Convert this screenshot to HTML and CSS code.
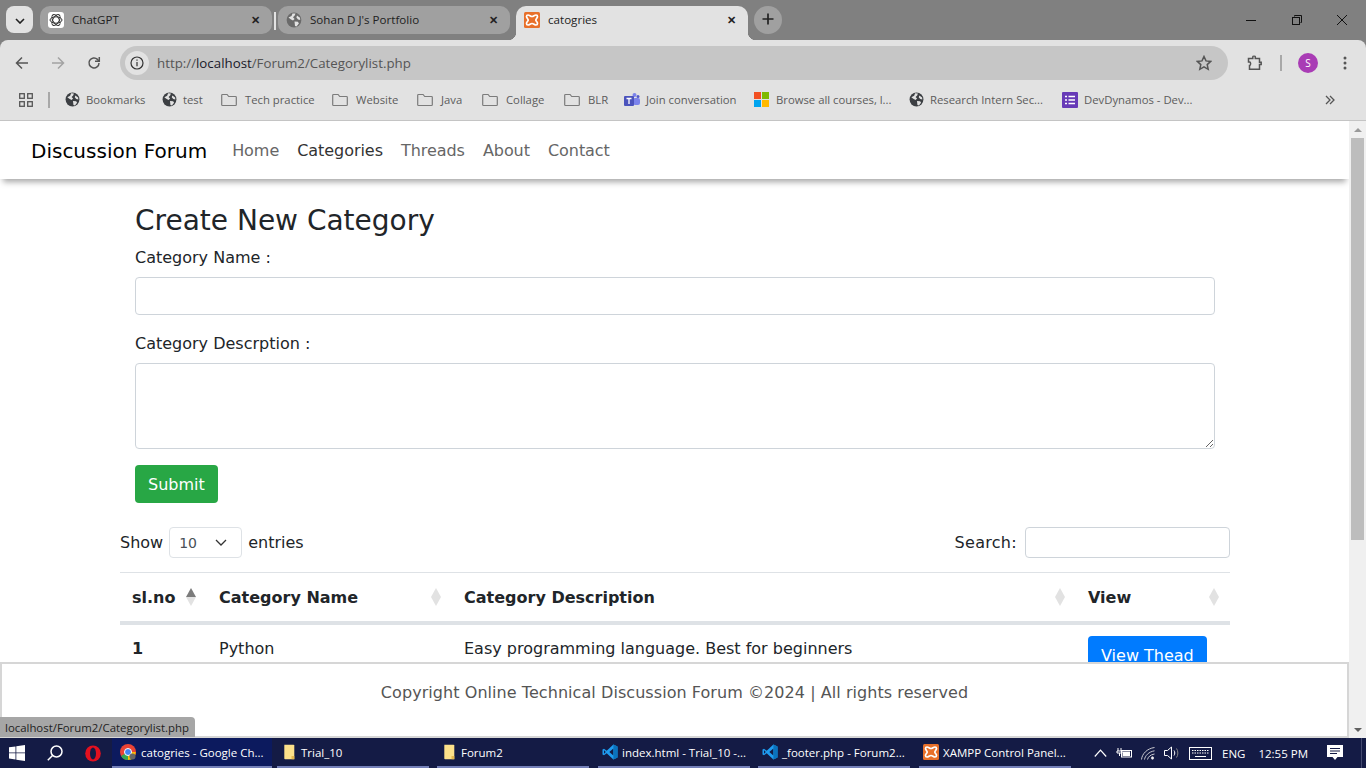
FILE: index.html
```html
<!DOCTYPE html>
<html lang="en">
<head>
    <meta charset="UTF-8">
    <title>catogries</title>
    <link rel="stylesheet" href="styles.css">
</head>
<body>
    <svg class="defs" width="0" height="0">
        <symbol id="globe" viewBox="0 0 16 16">
            <circle cx="8" cy="8" r="7.4" fill="currentColor"/>
            <path d="M2.5 5.5 5.5 4l1-2.6 3 .2-.8 2L7 5.3 8.6 7 7 8.4 4.6 7.3zM8.5 9.6l3.4.2 1 1.7-2.4 3-1.5-.6zM11 3.6l3 2.2.2 2.2-2.2-.6-1.6-1.8z" fill="#e2e2e2"/>
        </symbol>
        <symbol id="folder" viewBox="0 0 16 14">
            <path d="M1.5 1.5h4.6l1.6 2h6.8a.8.8 0 0 1 .8.8v7.4a.8.8 0 0 1-.8.8H1.5a.8.8 0 0 1-.8-.8V2.3a.8.8 0 0 1 .8-.8z" fill="none" stroke="#7b7b7b" stroke-width="1.2"/>
        </symbol>
        <symbol id="xampp" viewBox="0 0 16 16">
            <rect width="16" height="16" rx="1.5" fill="#e8702a"/>
            <path d="M4 3C5.500 3 6.500 4.500 8 4.500S10.500 3 12 3C13 3 13.500 3.500 13.500 4.500 13.500 6 11.800 6.800 11.800 8S13.500 10 13.500 11.500C13.500 12.500 13 13 12 13 10.500 13 9.500 11.500 8 11.500S5.500 13 4 13C3 13 2.500 12.500 2.500 11.500 2.500 10 4.200 9.200 4.200 8S2.500 6 2.500 4.500C2.500 3.500 3 3 4 3z" fill="none" stroke="#fff" stroke-width="1.7"/>
        </symbol>
        <symbol id="vscode" viewBox="0 0 16 16">
            <path d="M11.4.6 15.500 2.500v11l-4.100 1.900L4.700 9.200 2 11.300.5 10.500V5.500L2 4.700l2.700 2.100z" fill="#1f9cf0"/>
            <path d="M11.400 4.600 7.300 8l4.100 3.400zM2 6.300v3.400L3.800 8z" fill="#141b45"/>
            <path d="M11.400.6 15.500 2.500v11l-4.100 1.900z" fill="#0a72bd"/>
        </symbol>
        <symbol id="filefolder" viewBox="0 0 14 20">
            <path d="M.5 1H12a1 1 0 0 1 1 1v17H1.500a1 1 0 0 1-1-1z" fill="#fde18a"/>
            <path d="M9.500 19v-4H13v4z" fill="#e6b94c"/>
        </symbol>
    </svg>

    <div class="tabstrip">
        <button class="tab-search">
            <svg width="10" height="6" viewBox="0 0 10 6"><path d="M1 1l4 4 4-4" fill="none" stroke="#222" stroke-width="1.6"/></svg>
        </button>
        <div class="tab">
            <span class="gpt-icon">
                <svg width="14" height="14" viewBox="0 0 14 14" fill="none" stroke="#333" stroke-width="1"><ellipse cx="7" cy="7" rx="6" ry="3.2"/><ellipse cx="7" cy="7" rx="6" ry="3.2" transform="rotate(60 7 7)"/><ellipse cx="7" cy="7" rx="6" ry="3.2" transform="rotate(120 7 7)"/></svg>
            </span>
            <span class="tab-title">ChatGPT</span>
            <span class="tab-x">✕</span>
        </div>
        <span class="tab-sep"></span>
        <div class="tab">
            <svg class="fav globe-dim" width="16" height="16"><use href="#globe"/></svg>
            <span class="tab-title">Sohan D J's Portfolio</span>
            <span class="tab-x">✕</span>
        </div>
        <div class="tab tab-active">
            <svg class="fav" width="16" height="16"><use href="#xampp"/></svg>
            <span class="tab-title">catogries</span>
            <span class="tab-x">✕</span>
        </div>
        <button class="tab-new">
            <svg width="12" height="12" viewBox="0 0 12 12"><path d="M6 .5v11M.5 6h11" stroke="#222" stroke-width="1.7"/></svg>
        </button>
        <div class="win-controls">
            <svg width="12" height="12" viewBox="0 0 12 12"><path d="M0 6.500h10" stroke="#111" stroke-width="1"/></svg>
            <svg width="12" height="12" viewBox="0 0 12 12" fill="none" stroke="#111"><path d="M3.500 2.500V1.500h7v7h-1"/><rect x="1.500" y="3.500" width="7" height="7"/></svg>
            <svg width="12" height="12" viewBox="0 0 12 12"><path d="M1 1l10 10M11 1 1 11" stroke="#111" stroke-width="1"/></svg>
        </div>
    </div>

    <div class="toolbar">
        <div class="nav-btns">
            <svg width="16" height="16" viewBox="0 0 16 16" fill="none" stroke="#555" stroke-width="1.5"><path d="M14 8H2.500M8 2.500 2.500 8 8 13.500"/></svg>
            <svg width="16" height="16" viewBox="0 0 16 16" fill="none" stroke="#a3a3a3" stroke-width="1.5"><path d="M2 8h11.500M8 2.500 13.500 8 8 13.500"/></svg>
            <svg width="16" height="16" viewBox="0 0 16 16" fill="none" stroke="#555" stroke-width="1.5"><path d="M13 8a5 5 0 1 1-1.500-3.600L13 6"/><path d="M13.300 2v4.300H9"/></svg>
        </div>
        <div class="omnibox">
            <span class="info-chip">
                <svg width="14" height="14" viewBox="0 0 14 14" fill="none" stroke="#333" stroke-width="1.2"><circle cx="7" cy="7" r="6"/><path d="M7 6v4.200M7 3.500v1.300"/></svg>
            </span>
            <span class="url">http://<b>localhost</b>/Forum2/Categorylist.php</span>
            <svg class="star" width="16" height="16" viewBox="0 0 16 16" fill="none" stroke="#555" stroke-width="1.5"><path d="M8 1.500l2 4.400 4.700.5-3.500 3.200 1 4.700L8 11.900l-4.200 2.400 1-4.700L1.300 6.400 6 5.900z"/></svg>
        </div>
        <div class="tool-right">
            <svg width="16" height="16" viewBox="0 0 16 16" fill="none" stroke="#555" stroke-width="1.5"><path d="M1.500 3.500h4.300V1.800c0-.8 2.500-.8 2.500 0v1.700h4.200v3.700h1.700v2.300h-1.700v4.700H2.500v-3.800c1.500 0 1.500-3.300 0-3.300H1.500z"/></svg>
            <span class="tool-sep"></span>
            <span class="avatar">S</span>
            <svg width="4" height="14" viewBox="0 0 4 14" fill="#555"><circle cx="2" cy="2" r="1.5"/><circle cx="2" cy="7" r="1.5"/><circle cx="2" cy="12" r="1.5"/></svg>
        </div>
    </div>

    <div class="bookmarks">
        <svg class="apps" width="14" height="14" viewBox="0 0 14 14" fill="none" stroke="#555" stroke-width="1.3"><rect x=".7" y=".7" width="4.6" height="4.6"/><rect x="8.7" y=".7" width="4.6" height="4.6"/><rect x=".7" y="8.700" width="4.6" height="4.6"/><rect x="8.700" y="8.700" width="4.6" height="4.6"/></svg>
        <span class="bm-sep"></span>
        <a class="bm bm-bookmarks"><svg class="globe-dark" width="15" height="15"><use href="#globe"/></svg>Bookmarks</a>
        <a class="bm bm-test"><svg class="globe-dark" width="15" height="15"><use href="#globe"/></svg>test</a>
        <a class="bm bm-folder bm-tech"><svg width="16" height="14"><use href="#folder"/></svg>Tech practice</a>
        <a class="bm bm-folder bm-website"><svg width="16" height="14"><use href="#folder"/></svg>Website</a>
        <a class="bm bm-folder bm-java"><svg width="16" height="14"><use href="#folder"/></svg>Java</a>
        <a class="bm bm-folder bm-collage"><svg width="16" height="14"><use href="#folder"/></svg>Collage</a>
        <a class="bm bm-folder bm-blr"><svg width="16" height="14"><use href="#folder"/></svg>BLR</a>
        <a class="bm bm-join">
            <svg width="16" height="16" viewBox="0 0 16 16"><circle cx="10.500" cy="3" r="2" fill="#7b83eb"/><circle cx="14" cy="4.500" r="1.500" fill="#5059c9"/><rect x="9" y="6" width="7" height="7" rx="2" fill="#7b83eb"/><rect x="0" y="4" width="10" height="10" rx="1" fill="#4b53bc"/><path d="M2.500 6.500h5M5 6.500V12" stroke="#fff" stroke-width="1.3"/></svg>
            Join conversation</a>
        <a class="bm bm-browse">
            <svg width="15" height="15" viewBox="0 0 15 15"><rect width="7" height="7" fill="#f25022"/><rect x="8" width="7" height="7" fill="#7fba00"/><rect y="8" width="7" height="7" fill="#00a4ef"/><rect x="8" y="8" width="7" height="7" fill="#ffb900"/></svg>
            Browse all courses, l...</a>
        <a class="bm bm-research"><svg class="globe-dark" width="15" height="15"><use href="#globe"/></svg>Research Intern Sec...</a>
        <a class="bm bm-dev">
            <svg width="16" height="16" viewBox="0 0 16 16"><rect width="16" height="16" rx="1" fill="#673ab7"/><path d="M6.500 4.500H13M6.500 8H13M6.500 11.500H13M3 4.500h2M3 8h2M3 11.500h2" stroke="#fff" stroke-width="1.6"/></svg>
            DevDynamos - Dev...</a>
        <svg class="bm-more" width="10" height="10" viewBox="0 0 10 10" fill="none" stroke="#555" stroke-width="1.3"><path d="M1 1l4 4-4 4M5 1l4 4-4 4"/></svg>
    </div>

    <div class="viewport">
        <div class="page">
            <nav class="navbar">
                <a class="brand">Discussion Forum</a>
                <a class="nav-link">Home</a>
                <a class="nav-link nav-current">Categories</a>
                <a class="nav-link">Threads</a>
                <a class="nav-link">About</a>
                <a class="nav-link">Contact</a>
            </nav>

            <div class="container">
                <h2>Create New Category</h2>
                <div class="form-group">
                    <label>Category Name :</label>
                    <input type="text" class="form-control">
                </div>
                <div class="form-group">
                    <label>Category Descrption :</label>
                    <textarea class="form-control form-area"></textarea>
                </div>
                <button class="btn btn-success">Submit</button>
            </div>

            <div class="table-wrap">
                <div class="table-tools">
                    <div class="tools-group">
                        Show
                        <span class="entries-select">10
                            <svg width="12" height="7" viewBox="0 0 12 7" fill="none" stroke="#333" stroke-width="1.3"><path d="M1 1l5 5 5-5"/></svg>
                        </span>
                        entries
                    </div>
                    <div class="tools-group">
                        <span class="search-label">Search:</span>
                        <input type="text" class="search-input">
                    </div>
                </div>
                <table class="data-table">
                    <thead>
                        <tr>
                            <th class="col-no">sl.no <span class="sort sort-asc"></span></th>
                            <th class="col-name">Category Name <span class="sort"></span></th>
                            <th class="col-desc">Category Description <span class="sort"></span></th>
                            <th class="col-view">View <span class="sort"></span></th>
                        </tr>
                    </thead>
                    <tbody>
                        <tr>
                            <td><b>1</b></td>
                            <td>Python</td>
                            <td>Easy programming language. Best for beginners</td>
                            <td><a class="btn btn-primary">View Thead</a></td>
                        </tr>
                    </tbody>
                </table>
            </div>

            <footer class="site-footer">Copyright Online Technical Discussion Forum ©2024 | All rights reserved</footer>
            <div class="status-bubble">localhost/Forum2/Categorylist.php</div>
        </div>
        <div class="scrollbar">
            <span class="arrow-up"></span>
            <span class="thumb"></span>
            <span class="arrow-down"></span>
        </div>
    </div>

    <div class="taskbar">
        <svg class="tb-start" width="16" height="16" viewBox="0 0 16 16" fill="#fff"><path d="M0 2.300 6.500 1.400v6.100H0zM7.300 1.300 16 0v7.500H7.300zM0 8.300h6.500v6.200L0 13.600zM7.300 8.300H16V16l-8.700-1.300z"/></svg>
        <svg class="tb-search" width="16" height="16" viewBox="0 0 16 16" fill="none" stroke="#fff" stroke-width="1.5"><circle cx="9.500" cy="6.500" r="5.500"/><path d="M5.500 10.500 .8 15.200"/></svg>
        <svg class="tb-opera" width="16" height="17" viewBox="0 0 16 17"><ellipse cx="8" cy="8.500" rx="7.800" ry="8" fill="#e3101f"/><ellipse cx="8" cy="8.500" rx="3" ry="6" fill="#141b45"/></svg>
        <div class="task task-active">
            <svg width="16" height="16" viewBox="0 0 16 16"><circle cx="8" cy="8" r="8" fill="#ea4335"/><path d="M8 8 1 12a8 8 0 0 0 7 4 8 8 0 0 0 4-1z" fill="#34a853"/><path d="M8 8h7.800A8 8 0 0 1 8 16z" fill="#fbbc05"/><circle cx="8" cy="8" r="3.500" fill="#4285f4" stroke="#fff"/><circle cx="12.500" cy="12.500" r="3" fill="#666"/></svg>
            catogries - Google Ch...
        </div>
        <div class="task task-folder"><svg width="13" height="16"><use href="#filefolder"/></svg>Trial_10</div>
        <div class="task task-folder task-wide-gap"><svg width="13" height="16"><use href="#filefolder"/></svg>Forum2</div>
        <div class="task task-app"><svg width="16" height="16"><use href="#vscode"/></svg>index.html - Trial_10 -...</div>
        <div class="task task-app task-wide-gap"><svg width="16" height="16"><use href="#vscode"/></svg>_footer.php - Forum2...</div>
        <div class="task task-app task-last"><svg width="16" height="16"><use href="#xampp"/></svg>XAMPP Control Panel...</div>
        <div class="tray">
            <svg width="13" height="8" viewBox="0 0 13 8" fill="none" stroke="#fff" stroke-width="1.2"><path d="M.8 7.500 6.500 1.200l5.700 6.300"/></svg>
            <svg width="16" height="12" viewBox="0 0 16 12" fill="none" stroke="#fff"><path d="M2 1v3M5 1v3M1 4h5v2H1zM3.500 6v3"/><rect x="5.500" y="3.500" width="10" height="6.500"/><rect x="7" y="5" width="6.500" height="3.500" fill="#fff"/></svg>
            <svg width="14" height="13" viewBox="0 0 14 13" fill="none" stroke="#c8c8d0"><path d="M.5 12.500C1 7 6 1.500 13.500.5M3.500 12.500C4 9 7.500 4.800 13.500 3.800M6.500 12.500c.5-2.500 3-5 7-5.500"/><circle cx="11.500" cy="11" r="1.200" fill="#fff"/></svg>
            <svg width="16" height="14" viewBox="0 0 16 14" fill="none" stroke="#fff"><path d="M.5 4.500h3L7.500 1v12l-4-3.500h-3z"/><path d="M10 4.500c1 1.500 1 3.500 0 5"/><path d="M12.500 2.500c1.800 2.500 1.800 6.500 0 9" stroke="#888"/></svg>
            <svg width="23" height="13" viewBox="0 0 23 13" fill="none" stroke="#fff"><rect x=".5" y=".5" width="22" height="12"/><path d="M3 3.500h17M3 6h17" stroke-dasharray="1.500 1"/><path d="M6 9.500h11"/></svg>
            <span class="tray-lang">ENG</span>
            <span class="tray-time">12:55 PM</span>
            <svg class="tray-note" width="16" height="16" viewBox="0 0 16 16"><path d="M0 0h16v12h-5.500L8 15l-2.500-3H0z" fill="#fff"/><path d="M3 3.500h10M3 6h10M3 8.500h7" stroke="#141b45"/></svg>
        </div>
    </div>
</body>
</html>
```

FILE: styles.css
```css
* {
    box-sizing: border-box;
}
html, body {
    height: 100%;
}
body {
    margin: 0;
    height: 768px;
    overflow: hidden;
    display: flex;
    flex-direction: column;
    font-family: "DejaVu Sans", Verdana, sans-serif;
    background: #808080;
}
.defs {
    position: absolute;
}

/* browser chrome */
.tabstrip {
    height: 40px;
    flex: none;
    display: flex;
    align-items: flex-start;
    padding: 6px 0 0 6px;
    background: #808080;
    font: 11.6px "Open Sans", sans-serif;
    color: #222;
}
.tab-search {
    width: 27px;
    height: 27px;
    margin-right: 7px;
    border: 0;
    border-radius: 8px;
    background: #e2e2e2;
    padding: 0;
}
.tab {
    position: relative;
    width: 232px;
    height: 28px;
    display: flex;
    align-items: center;
    padding: 0 12px 1px 8px;
    border-radius: 10px;
    background: #a0a0a0;
}
.tab-sep {
    width: 2px;
    height: 18px;
    margin: 6px 2px 0 2px;
    background: #e2e2e2;
}
.tab-active {
    height: 34px;
    margin-left: 6px;
    padding-bottom: 7px;
    border-radius: 10px 10px 0 0;
    background: #e2e2e2;
}
.tab-active::before, .tab-active::after {
    content: "";
    position: absolute;
    bottom: 0;
    width: 8px;
    height: 8px;
}
.tab-active::before {
    left: -8px;
    background: radial-gradient(circle at 0 0, transparent 8px, #e2e2e2 8.5px);
}
.tab-active::after {
    right: -8px;
    background: radial-gradient(circle at 100% 0, transparent 8px, #e2e2e2 8.5px);
}
.tab-title {
    flex: 1;
    margin-left: 8px;
}
.tab-x {
    font-size: 11px;
    font-weight: bold;
}
.gpt-icon {
    width: 16px;
    height: 16px;
    display: flex;
    align-items: center;
    justify-content: center;
    border-radius: 3px;
    background: #fff;
}
.fav {
    flex: none;
}
.globe-dim {
    color: #6a6a6a;
}
.tab-new {
    width: 28px;
    height: 28px;
    margin-left: 6px;
    padding: 0;
    border: 0;
    border-radius: 50%;
    background: #a0a0a0;
}
.win-controls {
    margin-left: auto;
    width: 120px;
    height: 28px;
    display: flex;
    align-items: center;
    justify-content: space-between;
    padding-right: 18px;
}
.toolbar {
    height: 42px;
    flex: none;
    display: flex;
    align-items: center;
    padding-top: 4px;
    border-radius: 8px 8px 0 0;
    background: #e2e2e2;
}
.nav-btns {
    width: 120px;
    display: flex;
    gap: 20px;
    padding-left: 14px;
}
.omnibox {
    width: 1108px;
    height: 34px;
    display: flex;
    align-items: center;
    padding: 0 16px 0 5px;
    border-radius: 17px;
    background: #c6c6c6;
}
.info-chip {
    width: 24px;
    height: 24px;
    display: flex;
    align-items: center;
    justify-content: center;
    border-radius: 50%;
    background: #e2e2e2;
}
.url {
    flex: 1;
    margin-left: 8px;
    font: 13.3px "Open Sans", sans-serif;
    color: #555;
}
.url b {
    font-weight: normal;
    color: #1a1a2a;
}
.tool-right {
    flex: 1;
    display: flex;
    align-items: center;
    padding-left: 19px;
}
.tool-sep {
    width: 2px;
    height: 16px;
    margin: 0 16px 0 17px;
    background: #a8a8a8;
}
.avatar {
    width: 20px;
    height: 20px;
    margin-right: 25px;
    border-radius: 50%;
    background: #a93cb5;
    color: #fff;
    font: 10px/20px "Open Sans", sans-serif;
    text-align: center;
}
.bookmarks {
    height: 39px;
    flex: none;
    display: flex;
    align-items: center;
    padding-bottom: 3px;
    border-bottom: 1px solid #c4c4c4;
    background: #e2e2e2;
    font: 11.3px "Open Sans", sans-serif;
    color: #5c5c5c;
}
.apps {
    margin-left: 19px;
}
.bm-sep {
    width: 2px;
    height: 16px;
    margin: 0 15px;
    background: #a8a8a8;
}
.bm {
    flex: none;
    display: flex;
    align-items: center;
    gap: 6px;
    white-space: nowrap;
}
.bm svg {
    flex: none;
}
.bm-folder {
    gap: 8px;
}
.globe-dark {
    color: #3c3f43;
}
.bm-bookmarks { width: 97px; }
.bm-test { width: 59px; }
.bm-tech { width: 111px; }
.bm-website { width: 85px; }
.bm-java { width: 65px; }
.bm-collage { width: 82px; }
.bm-blr { width: 60px; }
.bm-join { width: 130px; }
.bm-browse { width: 155px; gap: 7px; }
.bm-research { width: 153px; }
.bm-dev { width: 134px; }
.bm-more {
    margin-left: auto;
    margin-right: 31px;
}

/* page */
.viewport {
    flex: 1;
    min-height: 0;
    display: flex;
    background: #fff;
}
.page {
    position: relative;
    flex: 1;
    overflow: hidden;
    color: #212529;
    font-size: 16px;
    line-height: 24px;
}
.navbar {
    height: 58px;
    display: flex;
    align-items: center;
    padding: 1px 0 0 31px;
    box-shadow: 0 6px 6px -3px rgba(0,0,0,0.35);
}
.brand {
    margin-right: 16px;
    font-size: 20px;
    color: #000;
}
.nav-link {
    padding: 0 9px;
    letter-spacing: -0.05px;
    color: #666;
}
.nav-current {
    color: #333;
}
.container {
    width: 1080px;
    margin-left: 135px;
    padding-top: 22px;
}
h2 {
    margin: 0 0 4px;
    font-size: 28px;
    font-weight: 400;
    line-height: 40px;
}
.form-group {
    margin-bottom: 16px;
}
label {
    display: block;
    padding-top: 1px;
    margin-bottom: 7px;
}
.form-control {
    display: block;
    width: 100%;
    height: 38px;
    border: 1px solid #ced4da;
    border-radius: 4px;
    background: #fff;
}
.form-area {
    height: 86px;
}
.btn {
    display: inline-block;
    border: 0;
    border-radius: 4px;
    padding: 7px 13px;
    font: inherit;
    color: #fff;
}
.btn-success {
    padding: 8px 13px 6px;
    background: #28a745;
}
.btn-primary {
    margin-top: -1px;
    padding: 8px 13px 6px;
    background: #007bff;
}
.table-wrap {
    width: 1110px;
    margin: 24px 0 0 120px;
}
.table-tools {
    height: 45px;
    display: flex;
    justify-content: space-between;
    align-items: flex-start;
}
.tools-group {
    display: flex;
    align-items: center;
    gap: 6px;
    height: 31px;
}
.search-label {
    letter-spacing: 0.3px;
}
.entries-select {
    width: 73px;
    height: 31px;
    display: flex;
    align-items: center;
    justify-content: space-between;
    padding: 0 14px 0 9px;
    border: 1px solid #dee2e6;
    border-radius: 4px;
    font-size: 14px;
    color: #495057;
}
.search-input {
    width: 205px;
    height: 31px;
    margin-left: 2px;
    border: 1px solid #ced4da;
    border-radius: 4px;
}
.data-table {
    width: 100%;
    border-collapse: collapse;
    table-layout: fixed;
}
.data-table th {
    position: relative;
    height: 50px;
    padding: 2px 12px 0;
    border-top: 1px solid #dee2e6;
    border-bottom: 4px solid #dee2e6;
    text-align: left;
    white-space: nowrap;
}
.data-table td {
    padding: 12px 12px 11px;
    vertical-align: top;
}
.col-no { width: 87px; }
.col-name { width: 245px; }
.col-desc { width: 624px; }
.col-view { width: 154px; }
.sort {
    position: absolute;
    right: 11px;
    top: 15px;
    width: 10px;
    height: 18px;
}
.sort::before, .sort::after {
    content: "";
    position: absolute;
    left: 0;
    border-left: 5px solid transparent;
    border-right: 5px solid transparent;
}
.sort::before {
    top: 0;
    border-bottom: 9px solid #e2e2e2;
}
.sort::after {
    bottom: 0;
    border-top: 9px solid #e2e2e2;
}
.sort-asc::before {
    border-bottom-color: #7b7b7b;
}
.site-footer {
    position: absolute;
    left: 0;
    right: 0;
    bottom: 0;
    height: 76px;
    border: 2px solid #d6d6d6;
    background: #fff;
    color: #555;
    letter-spacing: 0.06px;
    text-align: center;
    line-height: 57px;
}
.status-bubble {
    position: absolute;
    left: 0;
    bottom: 1px;
    height: 20px;
    padding: 0 6px 0 5px;
    border-radius: 0 4px 0 0;
    background: #a6a6a6;
    color: #222;
    font: 11.4px/21px "Open Sans", sans-serif;
}
.scrollbar {
    width: 17px;
    flex: none;
    display: flex;
    flex-direction: column;
    align-items: center;
    background: #f0f0f0;
}
.arrow-up {
    margin: 7px 0 6px;
    border-left: 4px solid transparent;
    border-right: 4px solid transparent;
    border-bottom: 4px solid #9a9a9a;
}
.thumb {
    width: 13px;
    height: 402px;
    background: #bdbdbd;
}
.arrow-down {
    margin-top: auto;
    margin-bottom: 6px;
    border-left: 4px solid transparent;
    border-right: 4px solid transparent;
    border-top: 4px solid #606060;
}

/* windows taskbar */
.taskbar {
    height: 30px;
    flex: none;
    display: flex;
    align-items: center;
    background: #141b45;
    font: 11.5px "Open Sans", sans-serif;
    color: #fff;
}
.tb-start {
    margin-left: 9px;
}
.tb-search {
    margin-left: 22px;
}
.tb-opera {
    margin-left: 22px;
    margin-right: 11px;
}
.task {
    height: 30px;
    width: 152px;
    margin-right: 8px;
    display: flex;
    align-items: center;
    gap: 4px;
    padding-left: 4px;
    border-bottom: 2px solid #7480b8;
    white-space: nowrap;
}
.task svg {
    flex: none;
}
.task-active {
    width: 160px;
    margin-right: 5px;
    padding-left: 8px;
    gap: 5px;
    background: #0c1a5e;
}
.task-folder {
    padding-left: 6px;
    gap: 5px;
}
.task-wide-gap {
    margin-right: 9px;
}
.task-last {
    margin-right: 0;
}
.tray {
    flex: 1;
    height: 30px;
    display: flex;
    align-items: center;
    margin-right: 4px;
    padding-left: 23px;
    gap: 9px;
    border-right: 1px solid #444a70;
}
.tray-lang {
    margin-left: 1px;
}
.tray-time {
    margin-left: 4px;
}
.tray-note {
    margin-left: 10px;
}
```
